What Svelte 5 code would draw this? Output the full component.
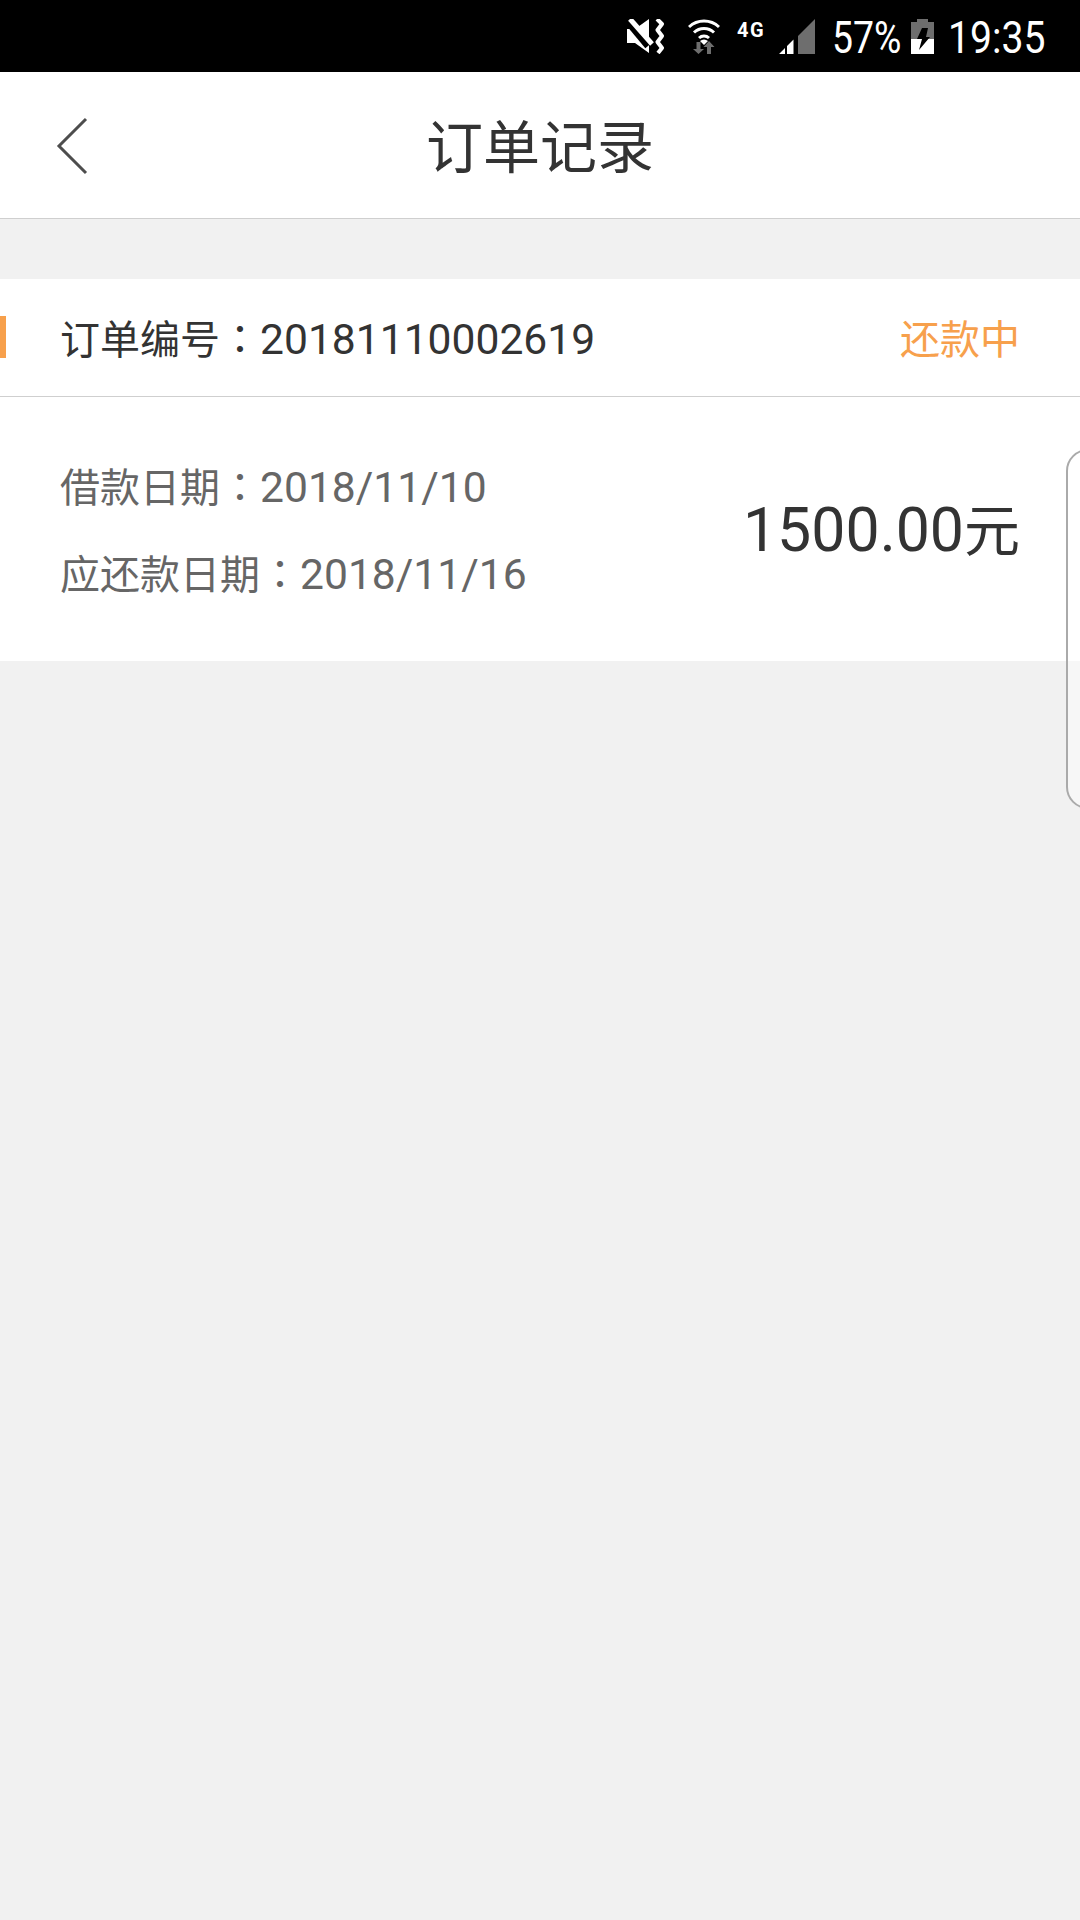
<script lang="ts">
  const order = {
    number: '20181110002619',
    status: '还款中',
    borrowDate: '2018/11/10',
    dueDate: '2018/11/16',
    amount: '1500.00'
  };
</script>

<div class="page">
  <div class="status-bar">
    <svg class="ic-mute" width="38" height="35" viewBox="0 0 38 35">
      <path d="M0 10h8L22 0v34L8 24H0z" fill="#fff" />
      <path d="M1 3l20 24" stroke="#000" stroke-width="7" />
      <path d="M3 0l22 25" stroke="#fff" stroke-width="5" />
      <path d="M30 0l5 5-4.500 6 4.500 6-4.500 6 4.500 6-4 5" fill="none" stroke="#fff" stroke-width="4" stroke-linejoin="round" />
    </svg>
    <svg class="ic-wifi" width="32" height="36" viewBox="0 0 32 36">
      <path d="M1 9a22 22 0 0 1 30 0M6 14.500a14.500 14.500 0 0 1 20 0M11 20a7.500 7.500 0 0 1 10 0" fill="none" stroke="#fff" stroke-width="3" />
      <path d="M16 27l-4-4a6 6 0 0 1 8 0z" fill="#fff" />
      <path d="M8.500 24h4v7h3.500l-5.500 5-5.500-5h3.500zM19 36h4v-7h3.500L21 23l-5.500 6H19z" fill="#6e6e6e" />
    </svg>
    <span class="net">4G</span>
    <svg class="ic-signal" width="36" height="35" viewBox="0 0 36 35">
      <path d="M36 0v35H19V17z" fill="#6e6e6e" />
      <path d="M0 35l6-6v6zM8 27l6.500-6.500V35H8z" fill="#fff" />
    </svg>
    <span class="pct">57%</span>
    <svg class="ic-batt" width="23" height="35" viewBox="0 0 23 35">
      <path d="M6 0h11v3h6v17H0V3h6z" fill="#6e6e6e" />
      <path d="M0 20h23v15H0z" fill="#fff" />
      <path d="M11 9h6l-2 9h4L8 31l3-11H6z" fill="#000" />
    </svg>
    <span class="time">19:35</span>
  </div>

  <header class="nav">
    <button class="back" aria-label="返回">
      <svg width="32" height="58" viewBox="0 0 32 58">
        <path d="M30 2L3 29l27 27" fill="none" stroke="#4d4d4d" stroke-width="3" />
      </svg>
    </button>
    <h1>订单记录</h1>
  </header>

  <section class="card">
    <div class="card-head">
      <span class="order-no">订单编号<span class="colon">：</span><span class="num">{order.number}</span></span>
      <span class="status">{order.status}</span>
    </div>
    <div class="card-body">
      <div class="dates">
        <p>借款日期<span class="colon">：</span><span class="num">{order.borrowDate}</span></p>
        <p>应还款日期<span class="colon">：</span><span class="num">{order.dueDate}</span></p>
      </div>
      <div class="amount"><span class="num">{order.amount}</span>元</div>
    </div>
  </section>

  <div class="edge-handle"></div>
</div>

<style>
  :global(body) {
    margin: 0;
    background: #f1f1f1;
  }

  .page {
    position: relative;
    display: flex;
    flex-direction: column;
    height: 1920px;
    overflow: hidden;
    background: #f1f1f1;
    font-family: Roboto, "Noto Sans CJK SC", sans-serif;
  }

  .status-bar {
    display: flex;
    align-items: center;
    justify-content: flex-end;
    height: 72px;
    padding-right: 35px;
    box-sizing: border-box;
    background: #000;
    color: #fff;
  }

  .ic-mute { margin-right: 23px; }
  .ic-wifi { margin-right: 17px; }

  .net {
    width: 28px;
    margin-right: 14px;
    margin-top: -13px;
    font-size: 20px;
    font-weight: 700;
    letter-spacing: 1.500px;
    white-space: nowrap;
  }

  .ic-signal { margin-right: 17px; }

  .pct {
    width: 68px;
    margin-top: 4px;
    margin-right: 11px;
    font-size: 44px;
    white-space: nowrap;
    transform: scaleX(0.85);
    transform-origin: left;
  }

  .ic-batt { margin-right: 14px; }

  .time {
    width: 97px;
    margin-top: 4px;
    font-size: 44px;
    white-space: nowrap;
    transform: scaleX(0.89);
    transform-origin: left;
  }

  .nav {
    display: flex;
    align-items: center;
    justify-content: center;
    position: relative;
    height: 147px;
    padding-bottom: 4px;
    box-sizing: border-box;
    border-bottom: 1px solid #cfcfcf;
    background: #fff;
  }

  .back {
    position: absolute;
    left: 56px;
    top: 45px;
    padding: 0;
    border: 0;
    background: none;
    line-height: 0;
  }

  h1 {
    margin: 0;
    font-size: 57px;
    font-weight: 400;
    color: #333;
  }

  .card {
    margin-top: 60px;
    background: #fff;
  }

  .card-head {
    display: flex;
    align-items: center;
    justify-content: space-between;
    position: relative;
    height: 118px;
    padding: 0 60px 2px;
    box-sizing: border-box;
    border-bottom: 1px solid #cfcfcf;
  }

  .card-head::before {
    content: "";
    position: absolute;
    left: 0;
    top: 37px;
    width: 6px;
    height: 42px;
    background: #f7a04c;
  }

  .order-no {
    font-size: 40px;
    color: #333;
  }

  .num {
    font-size: 42.600px;
    line-height: 1;
  }

  .colon {
    font-family: "Noto Sans CJK TC", sans-serif;
    line-height: 1;
  }

  .status {
    font-size: 40px;
    color: #f7a04c;
  }

  .card-body {
    display: flex;
    align-items: center;
    justify-content: space-between;
    height: 264px;
    padding: 0 60px;
    box-sizing: border-box;
  }

  .dates {
    padding-top: 6px;
  }

  .dates p {
    margin: 0;
    font-size: 40px;
    line-height: 87px;
    color: #666;
  }

  .amount {
    padding-bottom: 5px;
    font-size: 56px;
    color: #333;
  }

  .amount .num {
    font-size: 60.800px;
  }

  .edge-handle {
    position: absolute;
    top: 449px;
    right: -30px;
    width: 44px;
    height: 360px;
    box-sizing: border-box;
    border: 2px solid #aaa;
    border-radius: 22px;
    background: rgba(255, 255, 255, 0.45);
  }
</style>
